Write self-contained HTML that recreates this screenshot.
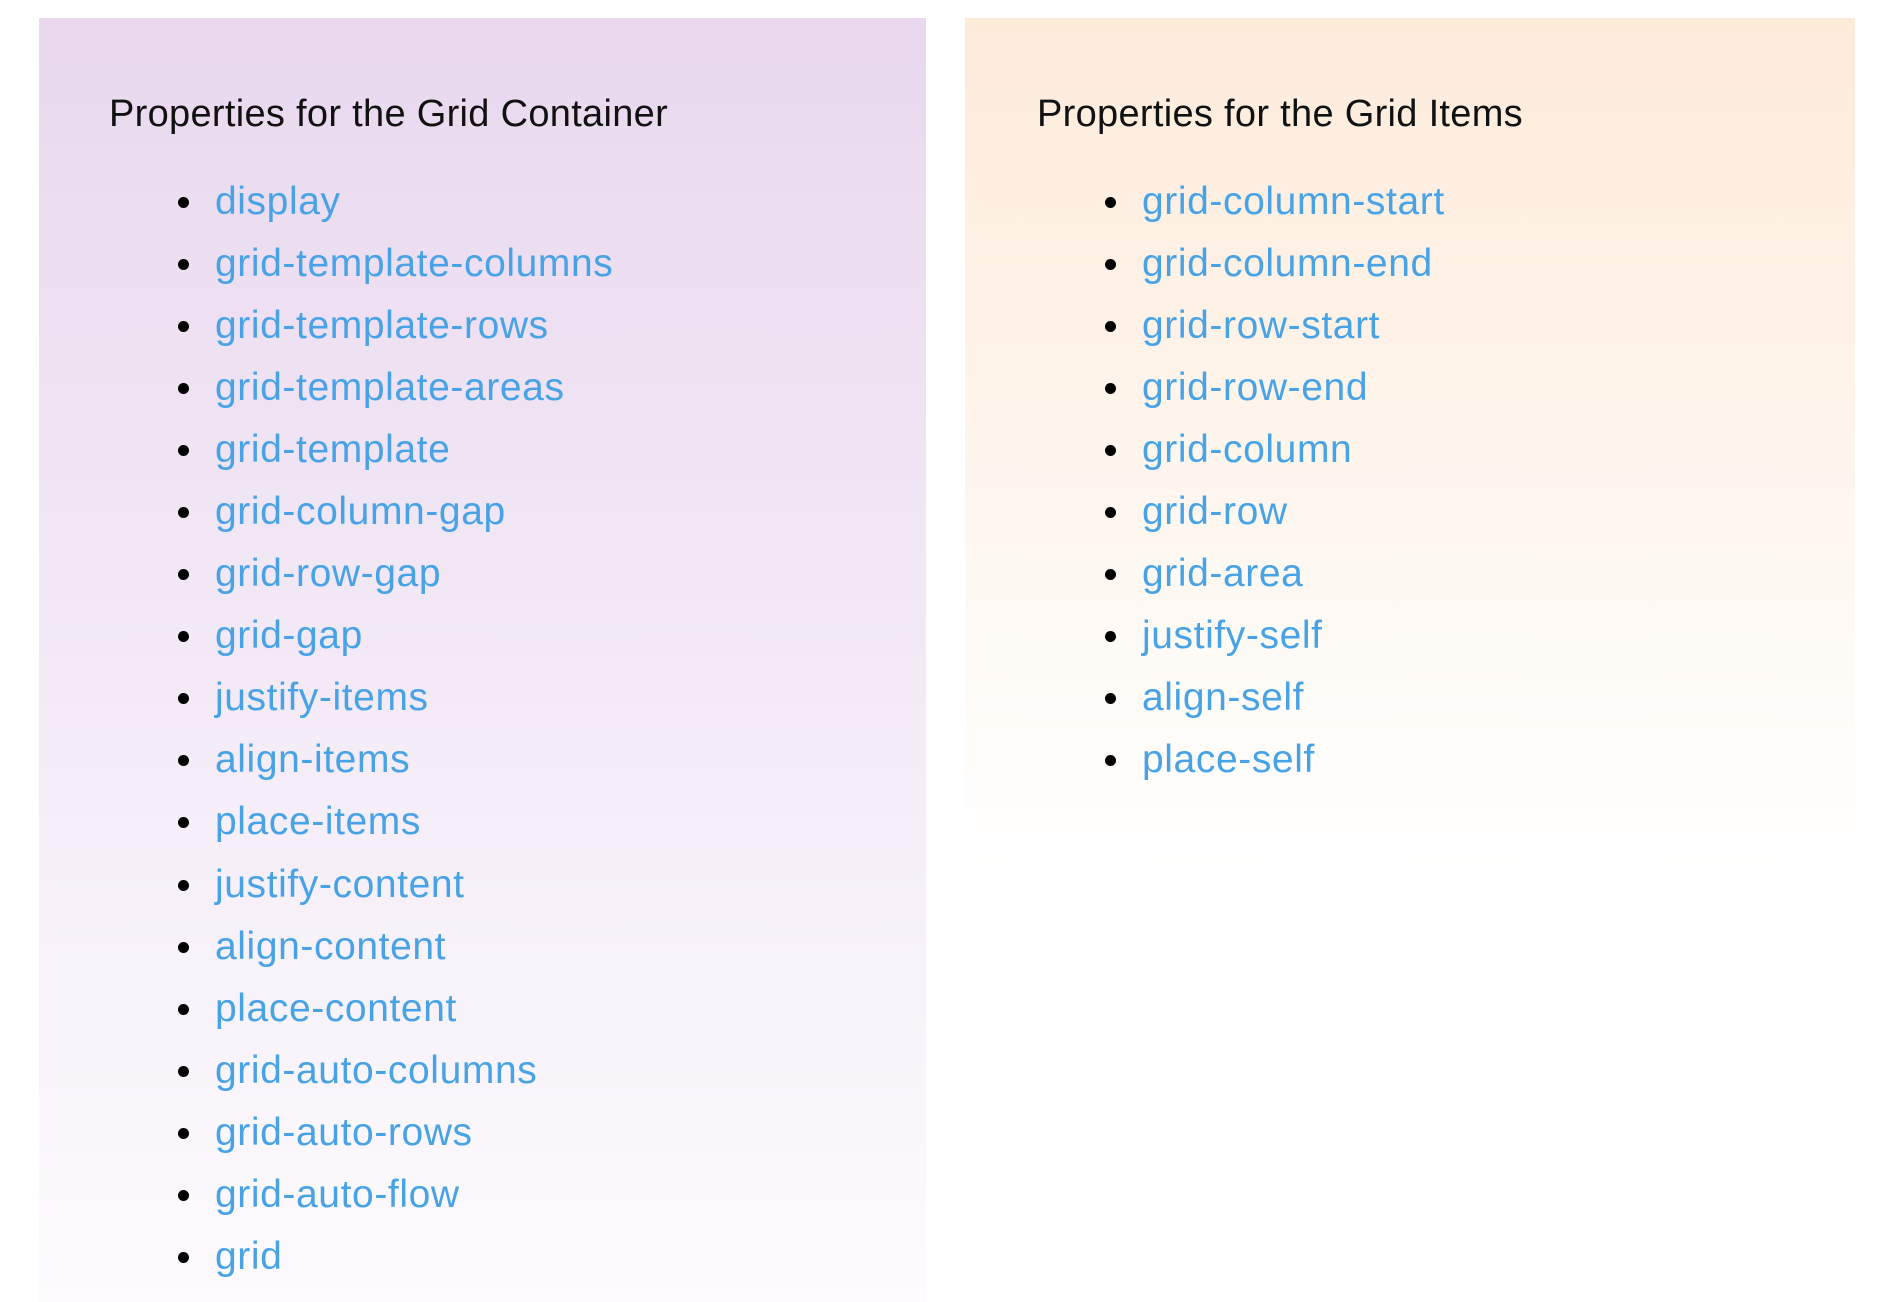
<!DOCTYPE html>
<html><head><meta charset="utf-8"><style>
html,body{margin:0;padding:0;width:1892px;height:1302px;background:#fff;overflow:hidden;font-family:"Liberation Sans",sans-serif;}
.p{position:absolute;}
#l{left:39px;top:18px;width:887px;height:1284px;background:linear-gradient(#e9d8ee,#fdfbfe);}
#r{left:965px;top:18px;width:890px;height:855px;background:linear-gradient(#fdebda,#ffffff);}
h3{position:absolute;left:70px;top:74px;margin:0;font-weight:normal;font-size:38px;line-height:44px;color:#111;letter-spacing:0.3px;}
#r h3{left:72px;}
ul{position:absolute;left:176px;top:153px;margin:0;padding:0;list-style:none;}
#r ul{left:177px;}
li{position:relative;font-size:39px;line-height:62.05px;color:#111;letter-spacing:0.6px;}
li::before{content:"";position:absolute;left:-37px;top:26px;width:11px;height:11px;border-radius:50%;background:#000;}
a{color:#48a3e6;text-decoration:none;}
</style></head><body>
<div class="p" id="l">
<h3>Properties for the Grid Container</h3>
<ul>
<li><a>display</a></li><li><a>grid-template-columns</a></li><li><a>grid-template-rows</a></li><li><a>grid-template-areas</a></li><li><a>grid-template</a></li><li><a>grid-column-gap</a></li><li><a>grid-row-gap</a></li><li><a>grid-gap</a></li><li><a>justify-items</a></li><li><a>align-items</a></li><li><a>place-items</a></li><li><a>justify-content</a></li><li><a>align-content</a></li><li><a>place-content</a></li><li><a>grid-auto-columns</a></li><li><a>grid-auto-rows</a></li><li><a>grid-auto-flow</a></li><li><a>grid</a></li>
</ul>
</div>
<div class="p" id="r">
<h3>Properties for the Grid Items</h3>
<ul>
<li><a>grid-column-start</a></li><li><a>grid-column-end</a></li><li><a>grid-row-start</a></li><li><a>grid-row-end</a></li><li><a>grid-column</a></li><li><a>grid-row</a></li><li><a>grid-area</a></li><li><a>justify-self</a></li><li><a>align-self</a></li><li><a>place-self</a></li>
</ul>
</div>
</body></html>
